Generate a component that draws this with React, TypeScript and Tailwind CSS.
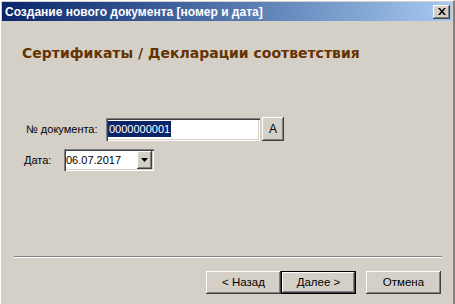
import React from "react";

const raised =
  "bg-[#d4d0c8] shadow-[inset_-1px_-1px_#404040,inset_1px_1px_#ffffff,inset_-2px_-2px_#808080,inset_2px_2px_#d4d0c8]";
const sunken =
  "bg-white shadow-[inset_1px_1px_#808080,inset_2px_2px_#404040,inset_-1px_-1px_#ffffff,inset_-2px_-2px_#d4d0c8]";

const App = () => {
  return (
    <div
      className="w-[455px] h-[304px] bg-[#d4d0c8] flex flex-col border-l border-t border-[#ffffff] border-r-[2px] border-r-[#808080] pl-px pt-px pr-px overflow-hidden"
      style={{ fontFamily: '"Liberation Sans", Arial, sans-serif' }}
    >
      {/* title bar */}
      <div className="h-[19px] flex items-center justify-between pl-[3px] pr-[2px] bg-gradient-to-r from-[#0a246a] to-[#a6caf0]">
        <span className="text-white font-bold text-[12px] leading-none">
          Создание нового документа [номер и дата]
        </span>
        <div className={`${raised} w-[17px] h-[14px] flex items-center justify-center`}>
          <svg width="8" height="7" viewBox="0 0 8 7">
            <path d="M0 0h2l2 2.5L6 0h2L5 3.5L8 7H6L4 4.5L2 7H0l3-3.5z" fill="#000" />
          </svg>
        </div>
      </div>

      {/* heading */}
      <div
        className="pl-[20px] mt-[23px] text-[14px] font-bold text-[#663300] leading-[18px]"
        style={{ fontFamily: '"DejaVu Sans", Verdana, sans-serif' }}
      >
        Сертификаты / Декларации соответствия
      </div>

      {/* fields */}
      <div className="flex flex-col mt-[55px] text-[11px] text-black">
        <div className="flex items-center pl-[24px]">
          <span className="w-[80px]">№ документа:</span>
          <div className={`${sunken} w-[154px] h-[23px] flex items-center pl-[2px]`}>
            <span className="bg-[#0a246a] text-white leading-[16px] px-px text-[11px]">0000000001</span>
          </div>
          <div className={`${raised} ml-[2px] w-[22px] h-[24px] flex items-center justify-center text-[12px]`}>
            A
          </div>
        </div>
        <div className="flex items-center pl-[22px] mt-[8px]">
          <span className="w-[40px]">Дата:</span>
          <div className={`${sunken} w-[90px] h-[22px] flex items-center pl-[2px] pr-[2px]`}>
            <span className="flex-1 leading-[16px] text-[11px]">06.07.2017</span>
            <div className={`${raised} w-[15px] h-[18px] flex items-center justify-center`}>
              <svg width="7" height="4" viewBox="0 0 7 4">
                <path d="M0 0h7L3.5 4z" fill="#000" />
              </svg>
            </div>
          </div>
        </div>
      </div>

      {/* separator */}
      <div className="mt-[85px] ml-[12px] mr-[10px] h-[2px] border-t border-[#808080] border-b border-b-white" />

      {/* buttons */}
      <div className="flex mt-[13px] text-[11.5px] text-black">
        <div className="ml-[204px] flex">
          <div className={`${raised} w-[75px] h-[23px] flex items-center justify-center`}>
            &lt; Назад
          </div>
          <div className="w-[75px] h-[23px] border border-black flex">
            <div className={`${raised} flex-1 flex items-center justify-center`}>Далее &gt;</div>
          </div>
          <div className={`${raised} ml-[10px] w-[75px] h-[23px] flex items-center justify-center`}>
            Отмена
          </div>
        </div>
      </div>
    </div>
  );
};

export default App;
